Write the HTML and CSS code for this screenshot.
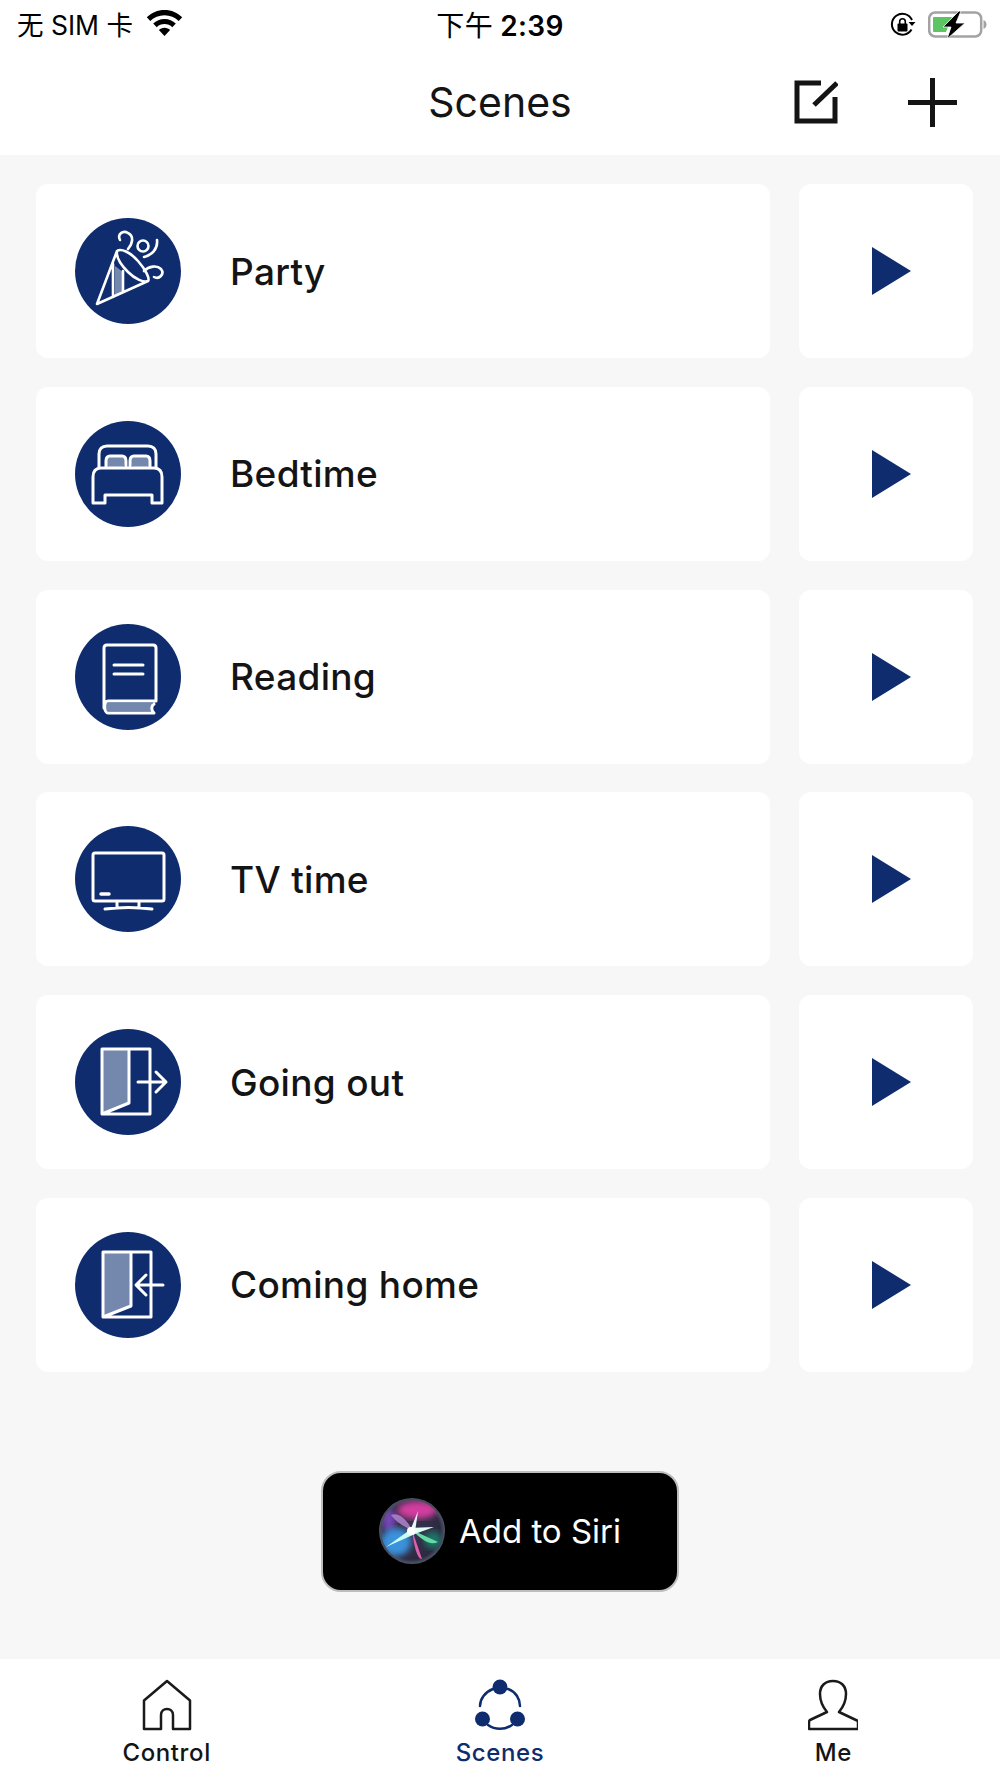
FILE: index.html
```html
<!DOCTYPE html>
<html lang="en">
<head>
    <meta charset="UTF-8">
    <meta name="viewport" content="width=device-width, initial-scale=1.0">
    <title>Scenes</title>
    <link rel="stylesheet" href="styles.css">
</head>
<body>
    <svg class="defs" width="0" height="0">
        <symbol id="play" viewBox="0 0 40 50"><path d="M0 1 39 25 0 49z"/></symbol>
    </svg>

    <header class="top">
        <div class="status-bar">
            <div class="status-left">
                <span>无 SIM 卡</span>
                <svg class="wifi" width="37" height="28" viewBox="0 0 37 28">
                    <path d="M18.500 1C11.500 1 5.500 3.700 .8 8.300l3.500 3.700C8 8.300 13 6.200 18.500 6.200S29 8.300 32.700 12l3.500-3.700C31.500 3.700 25.500 1 18.500 1z"/>
                    <path d="M18.500 10C14 10 10.200 11.700 7.200 14.600l3.500 3.700c2-2 4.800-3.200 7.800-3.200s5.800 1.200 7.800 3.200l3.500-3.700C26.800 11.700 23 10 18.500 10z"/>
                    <path d="M18.500 18.800c-2.200 0-4.200.9-5.600 2.300l5.600 6 5.600-6c-1.400-1.400-3.400-2.300-5.600-2.300z"/>
                </svg>
            </div>
            <div class="status-time"><span class="time-cjk">下午</span> 2:39</div>
            <div class="status-right">
                <svg width="26" height="26" viewBox="0 0 26 26">
                    <path d="M21.500 17.500A10.500 10.500 0 1 1 22 8" fill="none" stroke="#000" stroke-width="2"/>
                    <path d="M18.500 10h7l-3.500 4z"/>
                    <rect x="7.500" y="11.500" width="10" height="8" rx="1"/>
                    <path d="M9.700 12V9.500a2.800 2.800 0 0 1 5.600 0V12" fill="none" stroke="#000" stroke-width="1.600"/>
                </svg>
                <svg width="60" height="28" viewBox="0 0 60 28">
                    <rect x="1.200" y="1.500" width="52" height="24" rx="6" fill="none" stroke="#a3a3a3" stroke-width="2.500"/>
                    <path d="M55.500 9c2 .6 3 2.500 3 4.500s-1 3.900-3 4.500z" fill="#a3a3a3"/>
                    <path d="M6 6h18l-6 15H6a1 1 0 0 1-1-1V7a1 1 0 0 1 1-1z" fill="#5cc463"/>
                    <path d="M31 0 15 16h8l-4 12L37 12h-9l5-12z" stroke="#fff" stroke-width=".8"/>
                </svg>
            </div>
        </div>
        <nav class="nav-bar">
            <div></div>
            <h1 class="nav-title">Scenes</h1>
            <div class="nav-actions">
                <svg width="44" height="44" viewBox="0 0 44 44" fill="none" stroke="#141414" stroke-width="5">
                    <path d="M27 3H3v38h38V17"/>
                    <path d="M20 25 43 3"/>
                </svg>
                <svg width="49" height="49" viewBox="0 0 49 49" fill="none" stroke="#141414" stroke-width="5">
                    <path d="M24.500 0v49M0 24.500h49"/>
                </svg>
            </div>
        </nav>
    </header>

    <main class="content">
        <ul class="scene-list">
            <li class="scene">
                <div class="scene-card">
                    <svg class="scene-icon" viewBox="0 0 106 106">
                        <circle cx="53" cy="53" r="53" class="disc"/>
                        <path class="shade" d="M40 48l8 6v20l-8 4z"/>
                        <path class="line fine" d="M22 86 42 33c4-3 13 1 21 10s12 18 10 20zM42 33c-1 6 4 14 11 21s16 11 20 9M38 46v33M48 53v21"/>
                        <path class="line fine" d="M45 22c-3-6 3-10 8-7 6 3 5 10 0 16"/>
                        <circle class="line fine" cx="68" cy="28" r="5.500"/>
                        <path class="line fine" d="M82 22c1 9-5 15-13 17"/>
                        <path class="line fine" d="M69 53c5-5 13-6 17-2 4 5-2 11-7 8"/>
                    </svg>
                    <span class="scene-name">Party</span>
                </div>
                <button class="scene-play"><svg width="40" height="50"><use href="#play"/></svg></button>
            </li>
            <li class="scene">
                <div class="scene-card">
                    <svg class="scene-icon" viewBox="0 0 106 106">
                        <circle cx="53" cy="53" r="53" class="disc"/>
                        <path class="line" d="M24 46V33c0-5 3-8 8-8h41c5 0 8 3 8 8v13"/>
                        <rect class="shade" x="31" y="36" width="19" height="10" rx="3"/>
                        <rect class="shade" x="56" y="36" width="19" height="10" rx="3"/>
                        <path class="line" d="M31 46v-6c0-3 1-5 4-5h12c3 0 4 2 4 5v6M55 46v-6c0-3 1-5 4-5h12c3 0 4 2 4 5v6"/>
                        <path class="line" d="M18 56c0-6 3-9 8-9h53c5 0 8 3 8 9v26H77v-8H30v8H18z"/>
                    </svg>
                    <span class="scene-name">Bedtime</span>
                </div>
                <button class="scene-play"><svg width="40" height="50"><use href="#play"/></svg></button>
            </li>
            <li class="scene">
                <div class="scene-card">
                    <svg class="scene-icon" viewBox="0 0 106 106">
                        <circle cx="53" cy="53" r="53" class="disc"/>
                        <path class="shade" d="M33 79h44v8H33c-4 0-4-8 0-8z"/>
                        <path class="line" d="M29 84V24c0-2 1-3 3-3h46c2 0 3 1 3 3v53H33c-5 0-4 12 0 12h46c-3-3-3-7 0-9"/>
                        <path class="line" d="M39 41h29M39 50h29"/>
                    </svg>
                    <span class="scene-name">Reading</span>
                </div>
                <button class="scene-play"><svg width="40" height="50"><use href="#play"/></svg></button>
            </li>
            <li class="scene">
                <div class="scene-card">
                    <svg class="scene-icon" viewBox="0 0 106 106">
                        <circle cx="53" cy="53" r="53" class="disc"/>
                        <rect class="line" x="18" y="27" width="71" height="48" rx="2"/>
                        <path class="line thick" d="M26 68h8"/>
                        <path class="line" d="M42 76v5M64 76v5M30 83c15-2 32-2 47 0"/>
                    </svg>
                    <span class="scene-name">TV time</span>
                </div>
                <button class="scene-play"><svg width="40" height="50"><use href="#play"/></svg></button>
            </li>
            <li class="scene">
                <div class="scene-card">
                    <svg class="scene-icon" viewBox="0 0 106 106">
                        <circle cx="53" cy="53" r="53" class="disc"/>
                        <path class="shade" d="M27 20h27v54l-27 11z"/>
                        <path class="line" d="M27 20h48v65H27zM54 20v54l-27 11"/>
                        <path class="line" d="M63 53h28M81 43l10 10-10 10"/>
                    </svg>
                    <span class="scene-name">Going out</span>
                </div>
                <button class="scene-play"><svg width="40" height="50"><use href="#play"/></svg></button>
            </li>
            <li class="scene">
                <div class="scene-card">
                    <svg class="scene-icon" viewBox="0 0 106 106">
                        <circle cx="53" cy="53" r="53" class="disc"/>
                        <path class="shade" d="M28 20h28v54l-28 11z"/>
                        <path class="line" d="M28 20h48v65H28zM56 20v54l-28 11"/>
                        <path class="line" d="M62 53h26M71 43 61 53l10 10"/>
                    </svg>
                    <span class="scene-name">Coming home</span>
                </div>
                <button class="scene-play"><svg width="40" height="50"><use href="#play"/></svg></button>
            </li>
        </ul>

        <button class="siri-button">
            <svg class="siri-orb" width="66" height="66" viewBox="0 0 66 66">
                <defs>
                    <radialGradient id="orb-base" cx="50%" cy="50%" r="50%">
                        <stop offset="0" stop-color="#3a3550"/>
                        <stop offset=".85" stop-color="#2c2a40"/>
                        <stop offset="1" stop-color="#51586a"/>
                    </radialGradient>
                    <filter id="soft"><feGaussianBlur stdDeviation="3"/></filter>
                    <filter id="soft-small"><feGaussianBlur stdDeviation=".6"/></filter>
                    <clipPath id="orb-clip"><circle cx="33" cy="33" r="31"/></clipPath>
                </defs>
                <circle cx="33" cy="33" r="33" fill="url(#orb-base)"/>
                <g clip-path="url(#orb-clip)">
                    <ellipse cx="38" cy="12" rx="20" ry="9" fill="#d23d9f" filter="url(#soft)"/>
                    <ellipse cx="10" cy="22" rx="7" ry="12" fill="#7346b4" filter="url(#soft)"/>
                    <ellipse cx="17" cy="44" rx="15" ry="14" fill="#3a92dc" filter="url(#soft)"/>
                    <ellipse cx="54" cy="42" rx="9" ry="9" fill="#1f7566" filter="url(#soft)"/>
                    <path d="M33 32 59 44c-8 4-16-2-26-12z" fill="#62dca4" filter="url(#soft-small)"/>
                    <path d="M33 32 43 61c-5 0-8-13-10-29z" fill="#e05fae" filter="url(#soft-small)"/>
                    <path d="M12 17c8-3 16 5 21 15-8-3-16-8-21-15z" fill="#b184d0" opacity=".85" filter="url(#soft-small)"/>
                    <path d="M31 33 39 13 36 34z" fill="#eef3ff" filter="url(#soft-small)"/>
                    <path d="M35 29 7 49 36 36z" fill="#c6fff3" filter="url(#soft-small)"/>
                    <path d="M30 30 55 29 33 37z" fill="#e2fff6" filter="url(#soft-small)"/>
                    <circle cx="32" cy="33" r="4" fill="#fff" filter="url(#soft-small)"/>
                </g>
            </svg>
            <span>Add to Siri</span>
        </button>
    </main>

    <footer class="tab-bar">
        <div class="tab">
            <svg width="50" height="52" viewBox="0 0 50 52" fill="none" stroke="#1a1a1a" stroke-width="2.500" stroke-linejoin="round">
                <path d="M25 2 2 21.500V50h17V36c0-8 12-8 12 0v14h17V21.500z"/>
            </svg>
            <span>Control</span>
        </div>
        <div class="tab tab-active">
            <svg width="50" height="52" viewBox="0 0 50 52" fill="none" stroke="#0f2d6e" stroke-width="2.500" stroke-linecap="round">
                <circle cx="25" cy="8" r="7.500" fill="#0f2d6e" stroke="none"/>
                <circle cx="7.500" cy="40" r="7.500" fill="#0f2d6e" stroke="none"/>
                <circle cx="42.500" cy="40" r="7.500" fill="#0f2d6e" stroke="none"/>
                <path d="M18 10C10 13 5 20 5 27M13 46c7 5 17 5 24 0M33 10c8 3 12 10 12 17"/>
            </svg>
            <span>Scenes</span>
        </div>
        <div class="tab">
            <svg width="50" height="52" viewBox="0 0 50 52" fill="none" stroke="#1a1a1a" stroke-width="2.500" stroke-linejoin="round">
                <path d="M19 33C14 27 12 20 12 15 12 7 17 2 25 2s13 5 13 13c0 5-2 12-7 18l19 9v8H1v-7c0-1 .5-1.500 1-2z"/>
            </svg>
            <span>Me</span>
        </div>
    </footer>
</body>
</html>
```

FILE: styles.css
```css
:root {
    --navy: #0f2d6e;
    --ink: #141414;
    --page-bg: #f7f7f7;
    --ui-font: Inter, "Noto Sans CJK SC", sans-serif;
}

* { margin: 0; padding: 0; box-sizing: border-box; }

body {
    width: 1000px;
    height: 1778px;
    display: flex;
    flex-direction: column;
    font-family: var(--ui-font);
    color: var(--ink);
    background: var(--page-bg);
    overflow: hidden;
}

.defs { display: block; height: 0; }

/* header */
.top { background: #fff; height: 155px; flex: none; }

.status-bar {
    height: 50px;
    padding: 0 12px;
    display: grid;
    grid-template-columns: 1fr auto 1fr;
    align-items: center;
    font-size: 26.5px;
    color: #000;
}
.status-left { display: flex; align-items: center; gap: 13px; padding-left: 5px; }
.status-left span { margin-top: -3px; }
.status-left .wifi { margin-top: -4px; }
.status-time { font-size: 28px; font-weight: 600; letter-spacing: .3px; margin-top: -3px; }
.time-cjk { font-weight: 400; }
.status-right { display: flex; justify-content: flex-end; align-items: center; gap: 12px; }

.nav-bar {
    height: 105px;
    padding: 0 43px 1px;
    display: grid;
    grid-template-columns: 1fr auto 1fr;
    align-items: center;
}
.nav-title { font-size: 41px; font-weight: 400; }
.nav-actions { display: flex; justify-content: flex-end; align-items: center; gap: 70px; }

/* scenes */
.content {
    flex: 1;
    display: flex;
    flex-direction: column;
    align-items: center;
    padding: 29px 27px 0 36px;
}

.scene-list {
    list-style: none;
    width: 100%;
    display: flex;
    flex-direction: column;
    gap: 28.8px;
}

.scene { display: flex; gap: 29px; height: 174px; }

.scene-card {
    flex: 1;
    display: flex;
    align-items: center;
    gap: 49px;
    padding-left: 39px;
    background: #fff;
    border-radius: 12px;
}

.scene-icon { width: 106px; height: 106px; flex: none; }
.disc { fill: var(--navy); }
.line { fill: none; stroke: #fff; stroke-width: 3; stroke-linecap: round; stroke-linejoin: round; }
.fine { stroke-width: 2.600; }
.thick { stroke-width: 3.500; }
.shade { fill: #7488ae; }

.scene-name { font-size: 37px; font-weight: 450; letter-spacing: .3px; }

.scene-play {
    width: 174px;
    flex: none;
    display: flex;
    align-items: center;
    justify-content: center;
    padding-left: 11px;
    border: none;
    background: #fff;
    border-radius: 12px;
    fill: var(--navy);
}

.siri-button {
    margin: 99px 9px 0 0;
    width: 358px;
    height: 121px;
    display: flex;
    align-items: center;
    justify-content: center;
    gap: 14px;
    background: #000;
    border: 2.500px solid #bdbdbd;
    border-radius: 20px;
    color: #fff;
    font-family: var(--ui-font);
    font-size: 33px;
    font-weight: 400;
}

/* tabs */
.tab-bar {
    height: 119px;
    flex: none;
    background: #fff;
    display: grid;
    grid-template-columns: repeat(3, 1fr);
    padding-top: 20px;
}
.tab {
    display: flex;
    flex-direction: column;
    align-items: center;
    gap: 7px;
    font-size: 24px;
    font-weight: 450;
    letter-spacing: .6px;
    line-height: 29px;
}
.tab-active { color: var(--navy); }
```
